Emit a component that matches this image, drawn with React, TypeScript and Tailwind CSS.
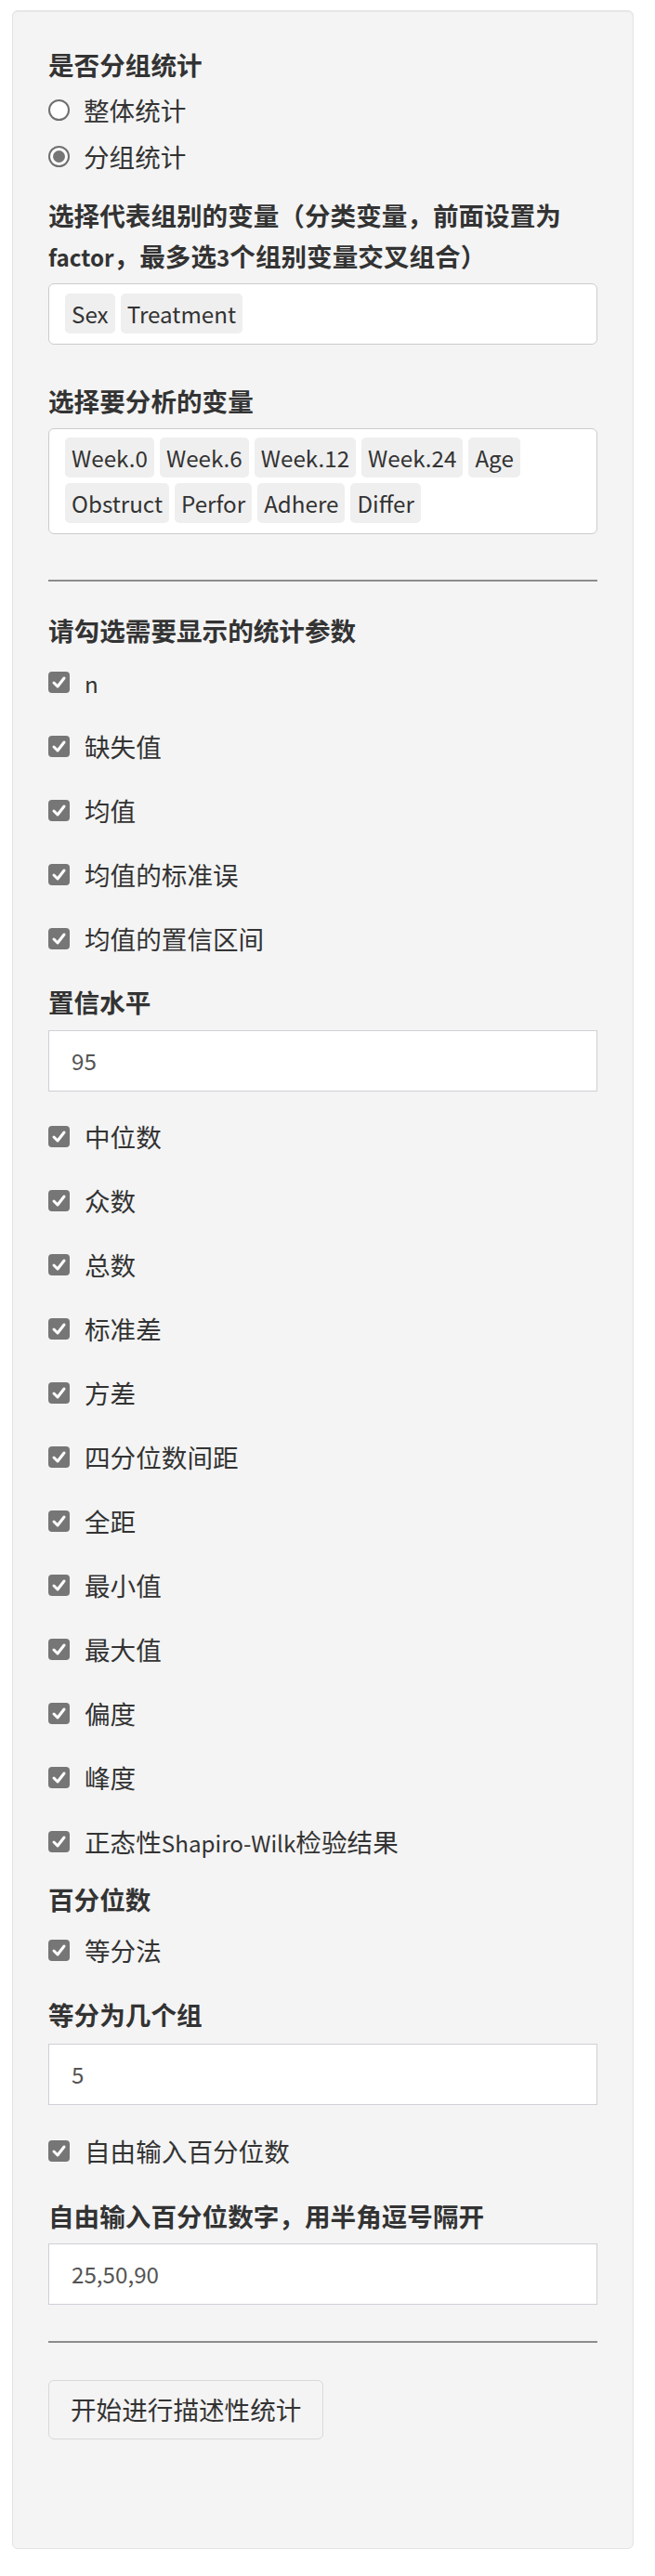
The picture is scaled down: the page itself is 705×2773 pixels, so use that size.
import React from "react";

const FONT = { fontFamily: '"Noto Sans CJK SC", "Noto Sans", sans-serif' };

function L({ children }: { children: React.ReactNode }) {
  return <span className="text-[24.2px] leading-none">{children}</span>;
}

function Label({ children, className = "" }: { children: React.ReactNode; className?: string }) {
  return <div className={`font-bold text-[#333] text-[27.6px] leading-[38px] ${className}`}>{children}</div>;
}

function CheckBox({ label, className = "" }: { label: React.ReactNode; className?: string }) {
  return (
    <div className={`flex items-center h-[38px] ${className}`}>
      <span className="w-[23px] h-[23px] rounded-[4px] bg-[#767676] flex items-center justify-center shrink-0">
        <svg width="17" height="17" viewBox="0 0 17 17">
          <polyline points="3,9 7,13 14,4" fill="none" stroke="white" strokeWidth="3" strokeLinecap="round" strokeLinejoin="round" />
        </svg>
      </span>
      <span className="ml-[16px] text-[27.6px] text-[#333] leading-[38px]">{label}</span>
    </div>
  );
}

function Radio({ label, checked, className = "" }: { label: string; checked?: boolean; className?: string }) {
  return (
    <div className={`flex items-center h-[38px] ${className}`}>
      <span className="w-[23px] h-[23px] rounded-full border-2 border-[#6f6f6f] bg-white flex items-center justify-center shrink-0">
        {checked && <span className="w-[13px] h-[13px] rounded-full bg-[#767676]" />}
      </span>
      <span className="ml-[15px] text-[27.6px] text-[#333] leading-[38px]">{label}</span>
    </div>
  );
}

function Tag({ children }: { children: React.ReactNode }) {
  return (
    <span className="h-[43px] px-[7px] rounded-[5px] bg-[#efefef] text-[#333] text-[24.2px] leading-[43px] flex items-center">
      {children}
    </span>
  );
}

function TextInput({ value, className = "" }: { value: string; className?: string }) {
  return (
    <div className={`h-[66px] border border-[#cfcfd6] bg-white flex items-center pl-[24px] text-[24.2px] text-[#555] ${className}`}>
      {value}
    </div>
  );
}

function Hr({ className = "" }: { className?: string }) {
  return <div className={`h-[2px] bg-[#8c8c8c] ${className}`} />;
}

export default function App() {
  const groupA: React.ReactNode[] = [<L>n</L>, "缺失值", "均值", "均值的标准误", "均值的置信区间"];
  const groupB: React.ReactNode[] = [
    "中位数",
    "众数",
    "总数",
    "标准差",
    "方差",
    "四分位数间距",
    "全距",
    "最小值",
    "最大值",
    "偏度",
    "峰度",
    <>
      正态性<L>Shapiro-Wilk</L>检验结果
    </>,
  ];
  return (
    <div style={FONT} className="bg-white w-[705px] min-h-[2773px] pt-[11px] pl-[13px]">
      <div className="w-[669px] h-[2733px] bg-[#f4f4f4] border border-[#e3e3e3] rounded-[6px] shadow-[inset_0_1px_1px_rgba(0,0,0,0.05)] px-[38px] pt-[38px] flex flex-col">
        <Label>是否分组统计</Label>
        <Radio label="整体统计" className="mt-[11px]" />
        <Radio label="分组统计" checked className="mt-[12px]" />
        <div className="mt-[22px] h-[88px] font-bold text-[#333] text-[27.6px] leading-[44px]">
          选择代表组别的变量（分类变量，前面设置为<L>factor</L>，最多选<L>3</L>个组别变量交叉组合）
        </div>
        <div className="mt-[8px] h-[66px] border border-[#ccc] rounded-[6px] bg-white pl-[17px] pt-[10px] flex gap-[6px] items-start">
          <Tag>Sex</Tag>
          <Tag>Treatment</Tag>
        </div>
        <Label className="mt-[41px]">选择要分析的变量</Label>
        <div className="mt-[11px] h-[114px] border border-[#ccc] rounded-[6px] bg-white pl-[17px] pr-[17px] pt-[9px] flex flex-wrap gap-[6px] content-start">
          {["Week.0", "Week.6", "Week.12", "Week.24", "Age", "Obstruct", "Perfor", "Adhere", "Differ"].map((t) => (
            <Tag key={t}>{t}</Tag>
          ))}
        </div>
        <Hr className="mt-[49px]" />
        <Label className="mt-[33px]">请勾选需要显示的统计参数</Label>
        {groupA.map((l, i) => (
          <CheckBox key={i} label={l} className={i === 0 ? "mt-[18px]" : "mt-[31px]"} />
        ))}
        <Label className="mt-[30px]">置信水平</Label>
        <TextInput value="95" className="mt-[12px]" />
        {groupB.map((l, i) => (
          <CheckBox key={i} label={l} className={i === 0 ? "mt-[29px]" : "mt-[31px]"} />
        ))}
        <Label className="mt-[24px]">百分位数</Label>
        <CheckBox label="等分法" className="mt-[17px]" />
        <Label className="mt-[31px]">等分为几个组</Label>
        <TextInput value="5" className="mt-[13px]" />
        <CheckBox label="自由输入百分位数" className="mt-[30px]" />
        <Label className="mt-[32px]">自由输入百分位数字，用半角逗号隔开</Label>
        <TextInput value="25,50,90" className="mt-[11px]" />
        <Hr className="mt-[39px]" />
        <div className="mt-[40px]">
          <div className="inline-flex h-[64px] items-center px-[23px] border border-[#d9d9d9] rounded-[6px] bg-[#f4f4f4] text-[27.6px] text-[#333]">
            开始进行描述性统计
          </div>
        </div>
      </div>
    </div>
  );
}
